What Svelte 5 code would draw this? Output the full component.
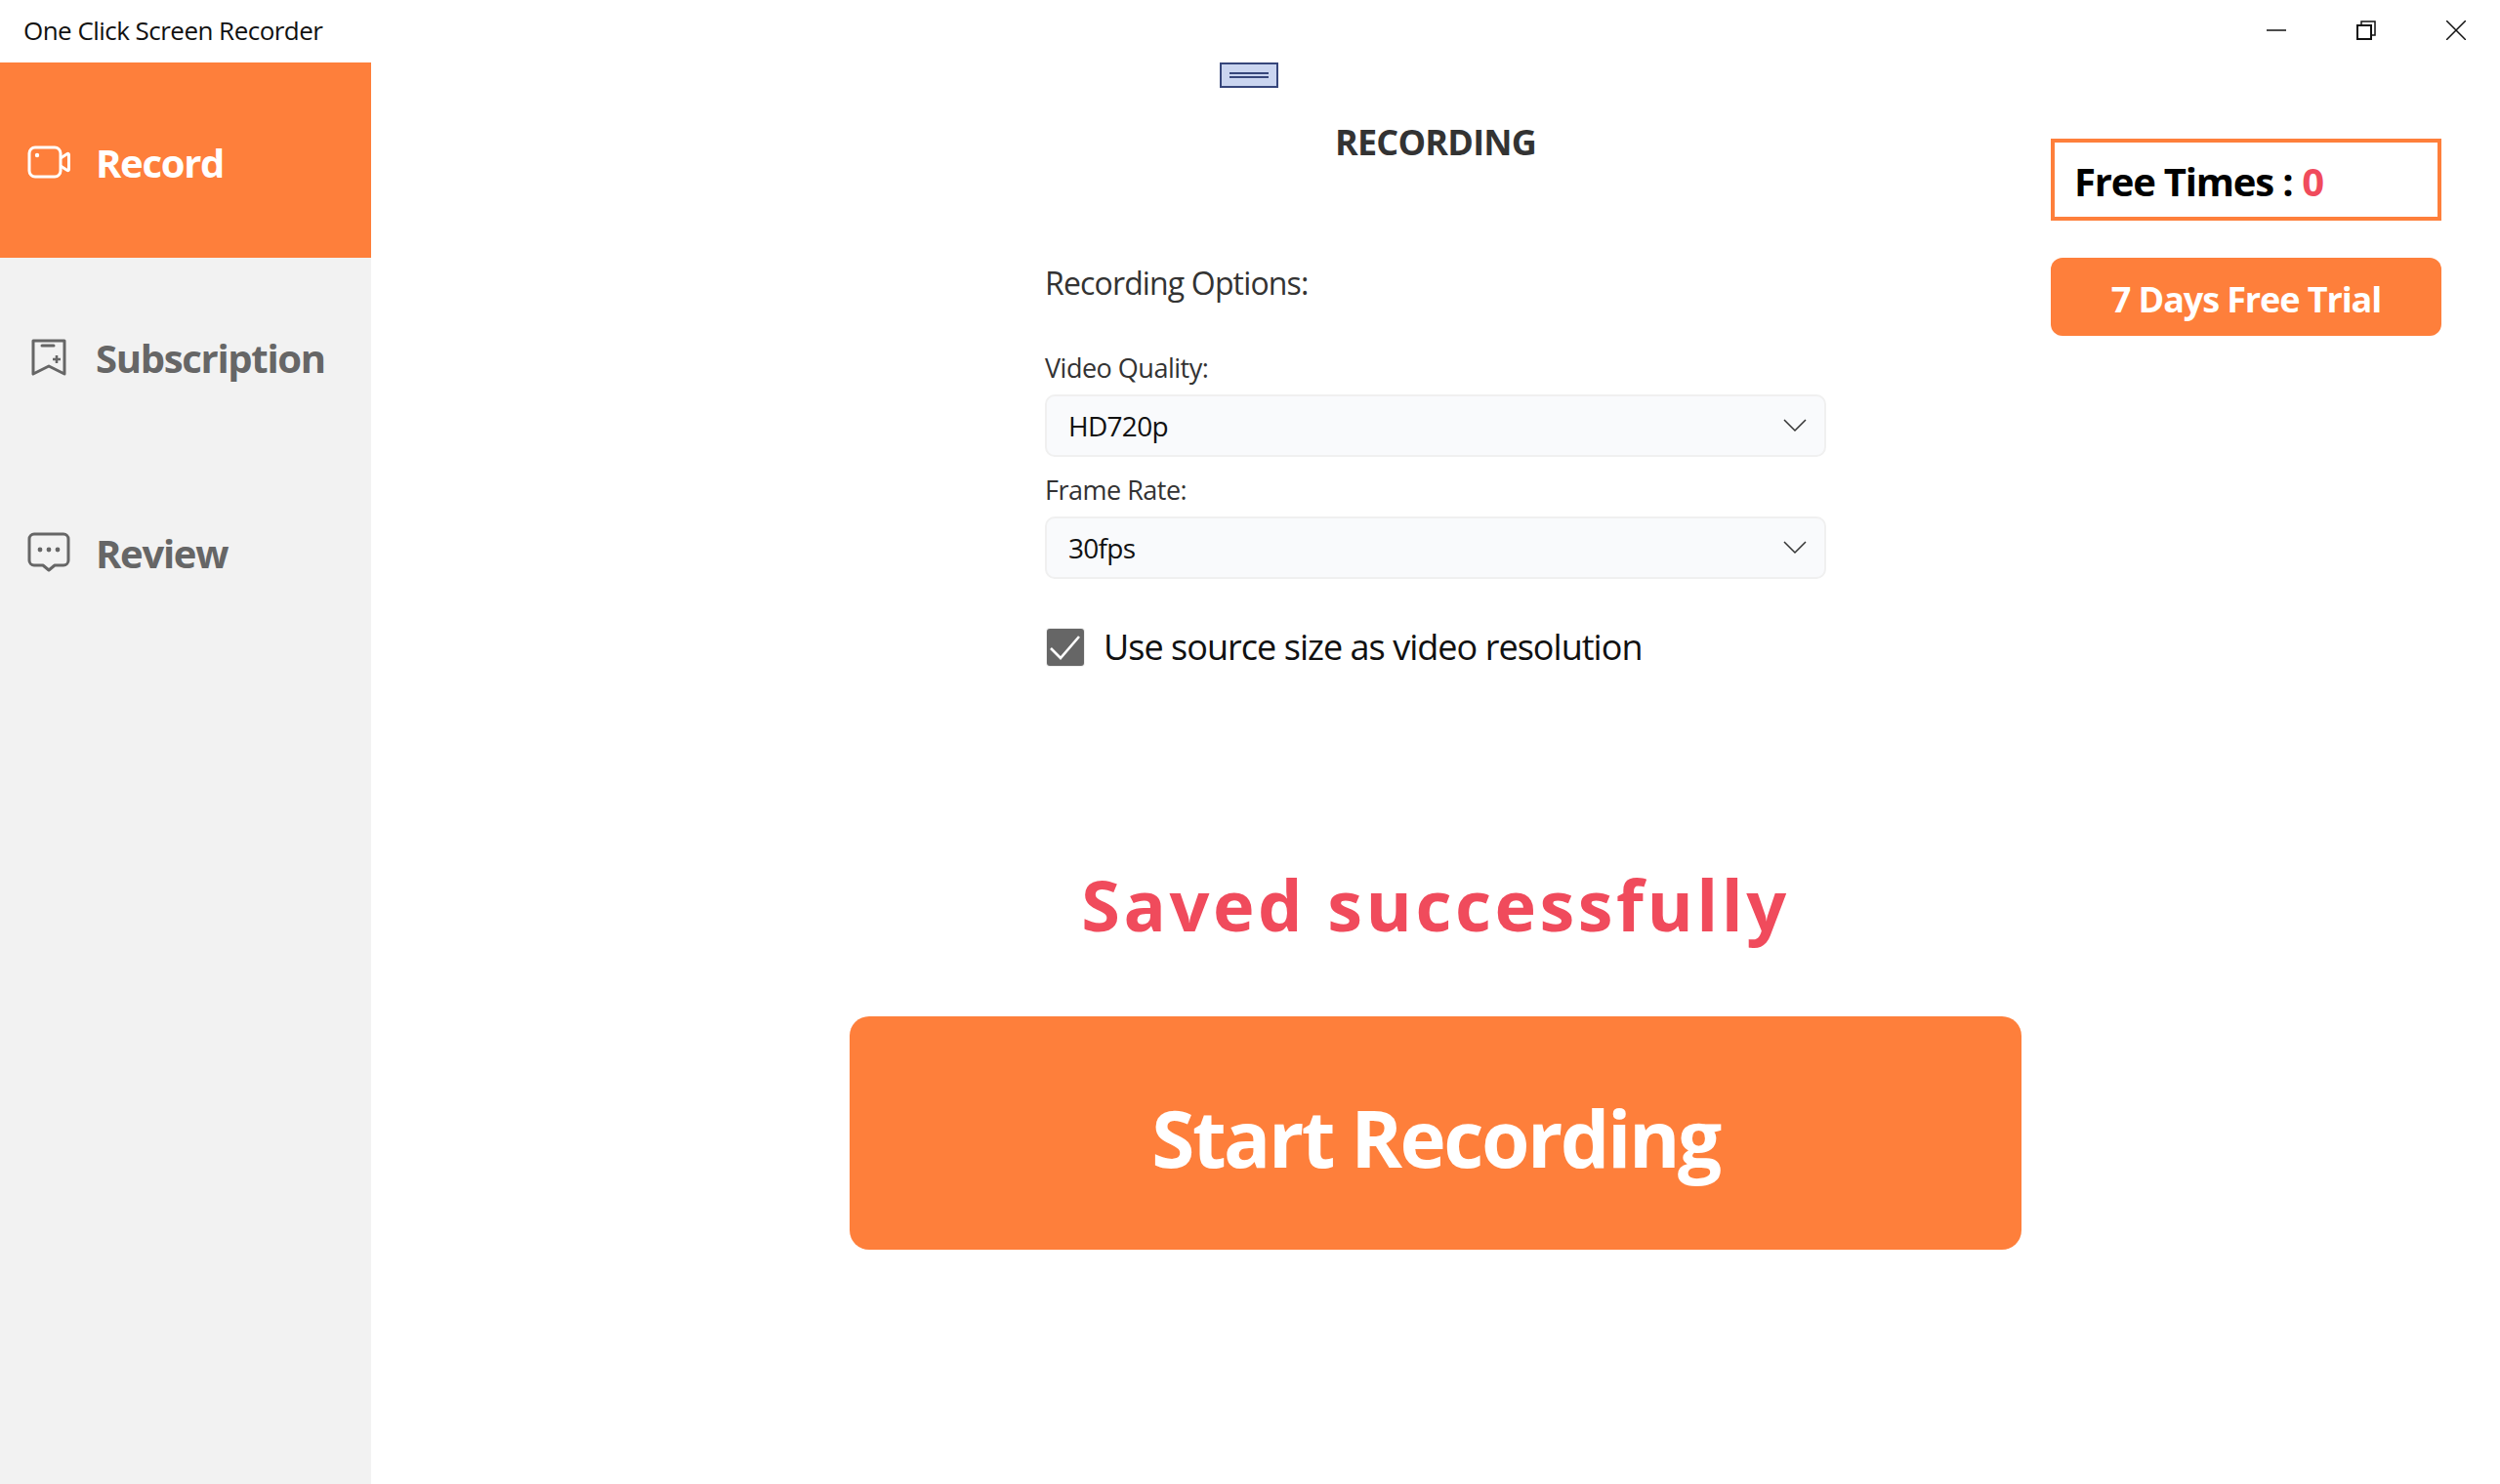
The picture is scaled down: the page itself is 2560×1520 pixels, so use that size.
<script>
	const navItems = [
		{ label: 'Record', icon: 'record', active: true },
		{ label: 'Subscription', icon: 'subscription', active: false },
		{ label: 'Review', icon: 'review', active: false }
	];

	const selects = [
		{ label: 'Video Quality:', value: 'HD720p' },
		{ label: 'Frame Rate:', value: '30fps' }
	];

	let useSourceSize = true;
</script>

<div class="window">
	<header class="titlebar">
		<span class="title">One Click Screen Recorder</span>
		<div class="controls">
			<svg width="20" height="20" viewBox="0 0 20 20" fill="none" stroke="#111" stroke-width="1.5">
				<path d="M0 10h20" />
			</svg>
			<svg width="20" height="20" viewBox="0 0 20 20" fill="none" stroke="#111" stroke-width="2">
				<rect x="1" y="5" width="14" height="14" />
				<path d="M5 4V1h14v14h-3" stroke-width="1.5" />
			</svg>
			<svg width="20" height="20" viewBox="0 0 20 20" fill="none" stroke="#111" stroke-width="1.5">
				<path d="M0 0l20 20M20 0L0 20" />
			</svg>
		</div>
	</header>

	<div class="body">
		<nav class="sidebar">
			{#each navItems as item}
				<div class="nav-item" class:active={item.active}>
					<span class="nav-icon">
						{#if item.icon === 'record'}
							<svg width="44" height="34" viewBox="0 0 44 34" fill="none" stroke="#fff" stroke-width="3" stroke-linejoin="round">
								<rect x="2" y="2" width="32" height="30" rx="6" />
								<path d="M34 13l7-4.5c.8-.5 1.500 0 1.500 1v15c0 1-.7 1.500-1.500 1L34 21" />
								<circle cx="10" cy="10" r="2.200" fill="#fff" stroke="none" />
							</svg>
						{:else if item.icon === 'subscription'}
							<svg width="44" height="38" viewBox="0 0 44 38" fill="none" stroke="#666" stroke-width="3" stroke-linejoin="round">
								<path d="M6 2h32v34l-16-8-16 8z" />
								<path d="M15 7h12" stroke-linecap="round" />
								<path d="M30 17v8M26 21h8" stroke-width="2.600" />
							</svg>
						{:else}
							<svg width="44" height="42" viewBox="0 0 44 42" fill="none" stroke="#666" stroke-width="3" stroke-linejoin="round">
								<path d="M7 2h30a5 5 0 0 1 5 5v22a5 5 0 0 1-5 5h-9l-6 5-6-5H7a5 5 0 0 1-5-5V7a5 5 0 0 1 5-5z" />
								<circle cx="13" cy="18" r="2.400" fill="#666" stroke="none" />
								<circle cx="22" cy="18" r="2.400" fill="#666" stroke="none" />
								<circle cx="31" cy="18" r="2.400" fill="#666" stroke="none" />
							</svg>
						{/if}
					</span>
					<span class="nav-label">{item.label}</span>
				</div>
			{/each}
		</nav>

		<main class="main">
			<div class="handle"><span></span></div>

			<section class="center">
				<h1>RECORDING</h1>

				<div class="options">
					<p class="options-title">Recording Options:</p>
					{#each selects as select}
						<label class="field">
							<span class="field-label">{select.label}</span>
							<span class="select">
								<span>{select.value}</span>
								<svg width="24" height="14" viewBox="0 0 24 14" fill="none" stroke="#333" stroke-width="1.500">
									<path d="M1 1l11 11L23 1" />
								</svg>
							</span>
						</label>
					{/each}
					<div class="check-row">
						<span class="checkbox" class:checked={useSourceSize}>
							<svg width="34" height="34" viewBox="0 0 34 34" fill="none" stroke="#fff" stroke-width="2.600">
								<path d="M2 18l10 10L31 6" />
							</svg>
						</span>
						<span>Use source size as video resolution</span>
					</div>
				</div>

				<p class="saved">Saved successfully</p>
				<button class="start">Start Recording</button>
			</section>

			<aside class="side">
				<div class="free-times"><span>Free Times :</span><span class="count">0</span></div>
				<button class="trial">7 Days Free Trial</button>
			</aside>
		</main>
	</div>
</div>

<style>
	:global(body) {
		margin: 0;
		background: #fff;
	}

	.window {
		width: 2560px;
		height: 1520px;
		display: flex;
		flex-direction: column;
		overflow: hidden;
		font-family: 'Open Sans', 'Noto Sans', sans-serif;
		color: #333;
	}

	.titlebar {
		height: 64px;
		flex: none;
		display: flex;
		align-items: center;
		justify-content: space-between;
		padding: 0 35px 0 24px;
	}

	.title {
		font-size: 26px;
		color: #111;
		letter-spacing: -0.53px;
		margin-top: -2px;
	}

	.controls {
		display: flex;
		gap: 72px;
		margin-top: -2px;
	}

	.body {
		flex: 1;
		display: flex;
	}

	.sidebar {
		width: 380px;
		flex: none;
		background: #f2f2f2;
	}

	.nav-item {
		height: 200px;
		box-sizing: border-box;
		padding: 4px 0 0 28px;
		display: flex;
		align-items: center;
		color: #666;
		font-size: 40px;
		font-weight: 700;
		letter-spacing: -1.3px;
	}

	.nav-item.active {
		background: #fe7f3b;
		color: #fff;
	}

	.nav-icon {
		width: 70px;
		display: flex;
		flex: none;
	}

	.main {
		flex: 1;
		position: relative;
		display: grid;
		grid-template-columns: 1fr 1200px 1fr;
	}

	.handle {
		position: absolute;
		left: 869px;
		top: 0;
		width: 56px;
		height: 22px;
		background: #cad5f0;
		border: 2px solid #36467b;
		display: flex;
		align-items: center;
		justify-content: center;
	}

	.handle span {
		width: 40px;
		height: 2px;
		border-top: 2px solid #36467b;
		border-bottom: 2px solid #36467b;
	}

	.center {
		grid-column: 2;
		display: flex;
		flex-direction: column;
		align-items: center;
	}

	h1 {
		margin: 60px 0 0;
		font-size: 36px;
		line-height: 44px;
		font-weight: 700;
		color: #333;
		letter-spacing: -0.8px;
	}

	.options {
		width: 800px;
		margin-top: 100px;
	}

	.options-title {
		margin: 0 0 46px;
		font-size: 32px;
		line-height: 44px;
		letter-spacing: -0.85px;
	}

	.field {
		display: block;
		margin-bottom: 15px;
	}

	.field-label {
		display: block;
		font-size: 27px;
		line-height: 38px;
		letter-spacing: -0.5px;
		margin-bottom: 8px;
	}

	.select {
		height: 60px;
		border: 2px solid #f0f0f0;
		border-radius: 10px;
		background: #f9fafc;
		display: flex;
		align-items: center;
		justify-content: space-between;
		padding: 0 18px 0 22px;
		font-size: 28px;
		color: #111;
		letter-spacing: -0.7px;
	}

	.check-row {
		display: flex;
		align-items: center;
		gap: 20px;
		margin: 48px 0 0 2px;
		font-size: 36px;
		line-height: 44px;
		color: #111;
		letter-spacing: -0.97px;
	}

	.checkbox {
		width: 38px;
		height: 38px;
		background: #666;
		border-radius: 3px;
		box-shadow: 0 0 0 1px #eee;
		display: flex;
		align-items: center;
		justify-content: center;
		flex: none;
	}

	.saved {
		margin: 193px 0 0;
		font-size: 72px;
		line-height: 96px;
		font-weight: 700;
		color: #f04b5c;
		letter-spacing: 3.5px;
	}

	.start {
		margin-top: 67px;
		width: 1200px;
		height: 239px;
		padding-top: 8px;
		border: none;
		border-radius: 20px;
		background: #fe7f3b;
		color: #fff;
		font-family: inherit;
		font-size: 80px;
		font-weight: 700;
		letter-spacing: -2.5px;
	}

	.side {
		padding: 78px 0 0 30px;
		width: 400px;
	}

	.free-times {
		height: 84px;
		box-sizing: border-box;
		border: 4px solid #fe7f3b;
		display: flex;
		align-items: center;
		gap: 10px;
		padding: 2px 0 0 20px;
		font-size: 40px;
		font-weight: 700;
		color: #000;
		letter-spacing: -1.2px;
	}

	.count {
		color: #f04b5c;
	}

	.trial {
		margin-top: 38px;
		width: 400px;
		height: 80px;
		padding-top: 6px;
		border: none;
		border-radius: 12px;
		background: #fe7f3b;
		color: #fff;
		font-family: inherit;
		font-size: 36px;
		font-weight: 700;
		letter-spacing: -1.1px;
	}
</style>
